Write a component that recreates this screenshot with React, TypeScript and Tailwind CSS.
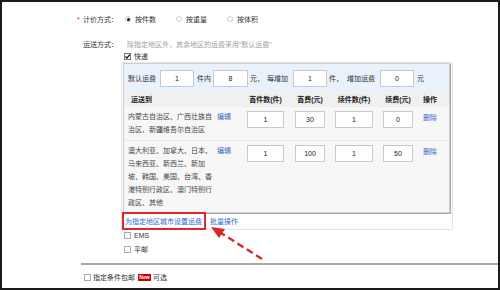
import React from 'react';

const Radio = ({ checked }: { checked?: boolean }) => (
  <span className="w-[6px] h-[6px] rounded-full border border-[#cfcfcf] bg-white flex items-center justify-center">
    {checked && <span className="w-[3px] h-[3px] rounded-full bg-[#111]" />}
  </span>
);

const Check = ({ checked }: { checked?: boolean }) => (
  <svg width="7" height="7" viewBox="0 0 7 7" className="shrink-0">
    <rect x="0.5" y="0.5" width="6" height="6" fill="#fff" stroke={checked ? '#777' : '#aaa'} />
    {checked && <path d="M1.5 3.5 L3 5 L5.7 1.6" stroke="#111" strokeWidth="1.2" fill="none" />}
  </svg>
);

const Field = ({ value, w }: { value: string; w: string }) => (
  <span className={`${w} h-[17px] bg-white border border-[#c9c9c9] flex items-center justify-center text-[7px] text-[#222] shrink-0`}>
    {value}
  </span>
);

const rows = [
  {
    area: ['内蒙古自治区、广西壮族自', '治区、新疆维吾尔自治区'],
    h: 'h-[34px] border-b border-[#e8e8e8]',
    vals: ['1', '30', '1', '0'],
  },
  {
    area: ['澳大利亚、加拿大、日本、', '马来西亚、新西兰、新加', '坡、韩国、美国、台湾、香', '港特别行政区、澳门特别行', '政区、其他'],
    h: 'h-[71px]',
    vals: ['1', '100', '1', '50'],
  },
];

export default function App() {
  return (
    <div className="w-[500px] h-[290px] border-2 border-[#1a1a1a] bg-white relative overflow-hidden text-[7px] leading-none text-[#333] font-['Liberation_Sans','Noto_Sans_CJK_SC',sans-serif]">
      {/* 计价方式 */}
      <div className="mt-[11px] h-[12px] flex items-center pl-[75px]">
        <span className="w-[6px] text-[#e02020]">*</span>
        <span className="w-[35px]">计价方式：</span>
        <div className="ml-[7px] flex items-center gap-[20px]">
          <span className="flex items-center gap-[4px]"><Radio checked /><span>按件数</span></span>
          <span className="flex items-center gap-[4px]"><Radio /><span>按重量</span></span>
          <span className="flex items-center gap-[4px]"><Radio /><span>按体积</span></span>
        </div>
      </div>

      {/* 运送方式 */}
      <div className="mt-[13px] h-[12px] flex items-center pl-[81px]">
        <span className="w-[35px]">运送方式：</span>
        <span className="ml-[9px] text-[#a0a0a0]">除指定地区外，其余地区的运费采用“默认运费”</span>
      </div>
      <div className="h-[12px] flex items-center pl-[122px]">
        <Check checked />
        <span className="ml-[3px]">快递</span>
      </div>

      {/* Express panel */}
      <div className="ml-[119px] w-[332px] border border-[#e4e4e4] bg-white">
        <div className="ml-[1px] w-[327px] border border-[#cdcdcd] shadow-[1px_1px_0_#a8a8a8] bg-[#f7f7f7]">
          <div className="h-[28px] bg-[#e9f1fb] flex items-center pl-[4px]">
            <span>默认运费</span>
            <span className="ml-[4px]"><Field value="1" w="w-[34px]" /></span>
            <span className="ml-[3px]">件内</span>
            <span className="ml-[2px]"><Field value="8" w="w-[35px]" /></span>
            <span className="ml-[2px]">元，</span>
            <span className="ml-[3px]">每增加</span>
            <span className="ml-[5px]"><Field value="1" w="w-[34px]" /></span>
            <span className="ml-[2px]">件，</span>
            <span className="ml-[4px]">增加运费</span>
            <span className="ml-[5px]"><Field value="0" w="w-[34px]" /></span>
            <span className="ml-[3px]">元</span>
          </div>

          <div className="h-[15px] bg-[#f0f0f0] flex items-center pl-[4px] font-bold text-[#222]">
            <span className="w-[89px] pl-[3px]">运送到</span>
            <span className="w-[30px]" />
            <span className="w-[37px] text-center">首件数(件)</span>
            <span className="ml-[11px] w-[30px] text-center">首费(元)</span>
            <span className="ml-[10px] w-[38px] text-center">续件数(件)</span>
            <span className="ml-[10px] w-[30px] text-center">续费(元)</span>
            <span className="ml-[10px]">操作</span>
          </div>

          {rows.map((r, i) => (
            <div key={i} className={`${r.h} flex items-start pt-[3px] pl-[4px]`}>
              <div className="w-[89px] leading-[13px] whitespace-nowrap text-[#444]">
                {r.area.map((l, j) => (
                  <div key={j}>{l}</div>
                ))}
              </div>
              <span className="w-[30px] leading-[13px] text-[#3366cc]">编辑</span>
              <span className="mt-[1px]"><Field value={r.vals[0]} w="w-[37px]" /></span>
              <span className="mt-[1px] ml-[11px]"><Field value={r.vals[1]} w="w-[30px]" /></span>
              <span className="mt-[1px] ml-[10px]"><Field value={r.vals[2]} w="w-[38px]" /></span>
              <span className="mt-[1px] ml-[10px]"><Field value={r.vals[3]} w="w-[30px]" /></span>
              <span className="ml-[10px] mt-[1px] leading-[13px] text-[#3366cc]">删除</span>
            </div>
          ))}
        </div>

        <div className="h-[16px] flex items-center">
          <span className="relative z-10 h-[18px] border-2 border-[#e3262a] flex items-center pl-[1px] pr-[2px] text-[#3366cc]">
            为指定地区城市设置运费
          </span>
          <span className="ml-[4px] text-[#3366cc]">批量操作</span>
        </div>
      </div>

      <div className="h-[11px] flex items-center pl-[122px]">
        <Check />
        <span className="ml-[3px]">EMS</span>
      </div>
      <div className="mt-[3px] h-[11px] flex items-center pl-[122px]">
        <Check />
        <span className="ml-[3px]">平邮</span>
      </div>

      <div className="mt-[8px] ml-[79px] h-[2px] bg-[#a9a9a9]" />

      <div className="mt-[6px] h-[12px] flex items-center pl-[82px]">
        <Check />
        <span className="ml-[2px]">指定条件包邮</span>
        <span className="ml-[3px] w-[13px] h-[7px] bg-[#cc0000] text-white text-[5px] font-bold flex items-center justify-center">New</span>
        <span className="ml-[2px]">可选</span>
      </div>

      {/* annotation arrow */}
      <svg className="absolute -left-[2px] -top-[2px] pointer-events-none" width="500" height="290" viewBox="0 0 500 290">
        <line x1="262" y1="259" x2="221" y2="233" stroke="#d62828" strokeWidth="2.4" strokeDasharray="7 4" />
        <polygon points="211,227 225,229 219,238" fill="#d62828" />
      </svg>
    </div>
  );
}
